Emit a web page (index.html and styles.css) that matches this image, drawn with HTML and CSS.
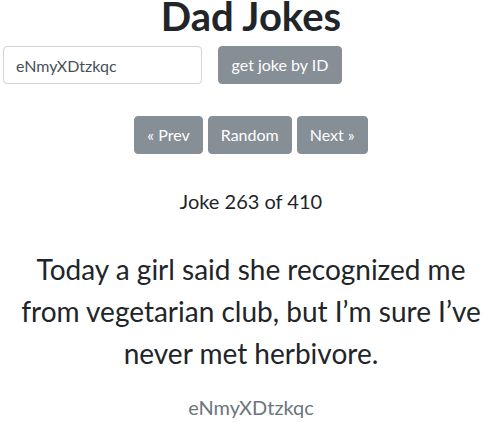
FILE: index.html
```html
<!DOCTYPE html>
<html lang="en">
<head>
<meta charset="utf-8">
<title>Dad Jokes</title>
<link rel="stylesheet" href="styles.css">
</head>
<body>
<main class="page">
  <h1 class="title">Dad Jokes</h1>
  <form class="id-form">
    <input class="id-input" type="text" value="eNmyXDtzkqc">
    <button class="btn" type="button">get joke by ID</button>
  </form>
  <nav class="pager">
    <button class="btn" type="button">« Prev</button>
    <button class="btn" type="button">Random</button>
    <button class="btn" type="button">Next »</button>
  </nav>
  <p class="counter">Joke 263 of 410</p>
  <p class="joke">Today a girl said she recognized me from vegetarian club, but I’m sure I’ve never met herbivore.</p>
  <p class="joke-id">eNmyXDtzkqc</p>
</main>
</body>
</html>
```
FILE: styles.css
```css
html, body {
  margin: 0;
  padding: 0;
  background: #fff;
}
body {
  font-family: Lato, "Open Sans", sans-serif;
  color: #212529;
  font-size: 16px;
}
.page {
  padding-left: 15px;
  text-align: center;
}
.title {
  margin: 0 0 14px;
  font-size: 40px;
  font-weight: 700;
  line-height: 32px;
}
.id-form {
  display: flex;
  align-items: center;
  gap: 16px;
  margin-left: -12px;
}
.id-input {
  box-sizing: border-box;
  width: 199px;
  height: 38px;
  padding: 6px 12px;
  border: 1px solid #ced4da;
  border-radius: 4px;
  font-family: inherit;
  font-size: 16px;
  color: #495057;
  background: #fff;
}
.btn {
  box-sizing: border-box;
  height: 38px;
  padding: 0 12px;
  border: 1px solid #868e96;
  border-radius: 4px;
  background: #868e96;
  color: #fff;
  font-family: inherit;
  font-size: 16px;
  line-height: 36px;
}
.id-form .btn {
  width: 124px;
}
.pager {
  display: flex;
  justify-content: center;
  gap: 5px;
  margin-top: 32px;
}
.counter {
  margin: 32px 0 0;
  font-size: 20px;
  line-height: 30px;
}
.joke {
  margin: 32px 0 0;
  font-size: 28px;
  line-height: 42px;
}
.joke-id {
  margin: 18px 0 0;
  font-size: 20px;
  line-height: 30px;
  color: #6c757d;
}
```
